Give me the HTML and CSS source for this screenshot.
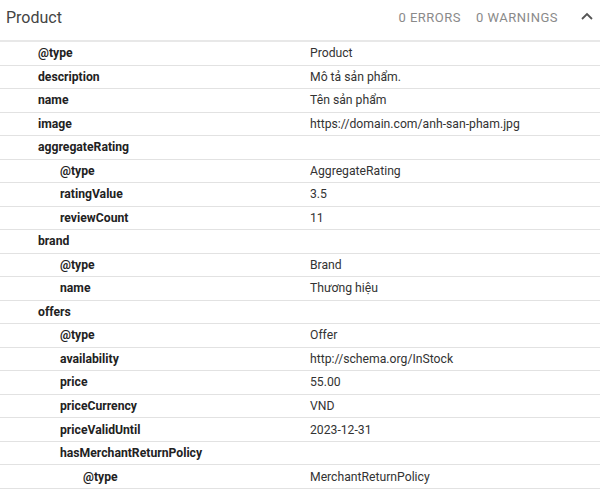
FILE: index.html
```html
<!DOCTYPE html>
<html>
<head>
<meta charset="utf-8">
<link rel="stylesheet" href="styles.css">
</head>
<body>
<div class="panel">
  <div class="header">
    <div class="title">Product</div>
    <div class="stats">
      <span class="stat">0 ERRORS</span>
      <span class="stat">0 WARNINGS</span>
      <svg class="chev" width="14" height="10" viewBox="0 0 14 10"><path d="M2 8 L7 3 L12 8" fill="none" stroke="#555" stroke-width="1.8"/></svg>
    </div>
  </div>
  <div class="table">
    <div class="row"><div class="key l1">@type</div><div class="val">Product</div></div>
    <div class="row"><div class="key l1">description</div><div class="val">Mô tả sản phẩm.</div></div>
    <div class="row"><div class="key l1">name</div><div class="val">Tên sản phẩm</div></div>
    <div class="row"><div class="key l1">image</div><div class="val">https://domain.com/anh-san-pham.jpg</div></div>
    <div class="row"><div class="key l1">aggregateRating</div><div class="val"></div></div>
    <div class="row"><div class="key l2">@type</div><div class="val">AggregateRating</div></div>
    <div class="row"><div class="key l2">ratingValue</div><div class="val">3.5</div></div>
    <div class="row"><div class="key l2">reviewCount</div><div class="val">11</div></div>
    <div class="row"><div class="key l1">brand</div><div class="val"></div></div>
    <div class="row"><div class="key l2">@type</div><div class="val">Brand</div></div>
    <div class="row"><div class="key l2">name</div><div class="val">Thương hiệu</div></div>
    <div class="row"><div class="key l1">offers</div><div class="val"></div></div>
    <div class="row"><div class="key l2">@type</div><div class="val">Offer</div></div>
    <div class="row"><div class="key l2">availability</div><div class="val">http://schema.org/InStock</div></div>
    <div class="row"><div class="key l2">price</div><div class="val">55.00</div></div>
    <div class="row"><div class="key l2">priceCurrency</div><div class="val">VND</div></div>
    <div class="row"><div class="key l2">priceValidUntil</div><div class="val">2023-12-31</div></div>
    <div class="row"><div class="key l2">hasMerchantReturnPolicy</div><div class="val"></div></div>
    <div class="row"><div class="key l3">@type</div><div class="val">MerchantReturnPolicy</div></div>
  </div>
</div>
</body>
</html>
```
FILE: styles.css
```css
html, body {
  margin: 0;
  padding: 0;
  background: #fff;
}
body {
  font-family: Roboto, "Liberation Sans", Arial, sans-serif;
  width: 600px;
  height: 492px;
  overflow: hidden;
}
.header {
  height: 40px;
  display: flex;
  align-items: center;
  justify-content: space-between;
  padding: 0 6px 0 6px;
  box-sizing: border-box;
}
.title {
  font-size: 16px;
  color: #444;
  padding-bottom: 6px;
}
.stats {
  display: flex;
  align-items: center;
  gap: 15px;
  padding-bottom: 6px;
}
.stat {
  font-size: 13px;
  color: #8a8a8a;
  letter-spacing: 0.5px;
}
.chev {
  margin-left: 7px;
  margin-top: -3px;
}
.table {
  border-top: 2px solid #e8e8e8;
}
.row {
  display: flex;
  align-items: center;
  height: 23.53px;
  box-sizing: border-box;
  border-bottom: 1px solid #e2e2e2;
  font-size: 12.2px;
}
.key {
  width: 310px;
  box-sizing: border-box;
  font-weight: bold;
  color: #222;
}
.l1 { padding-left: 38px; }
.l2 { padding-left: 60px; }
.l3 { padding-left: 83px; }
.val {
  color: #333;
}
```
